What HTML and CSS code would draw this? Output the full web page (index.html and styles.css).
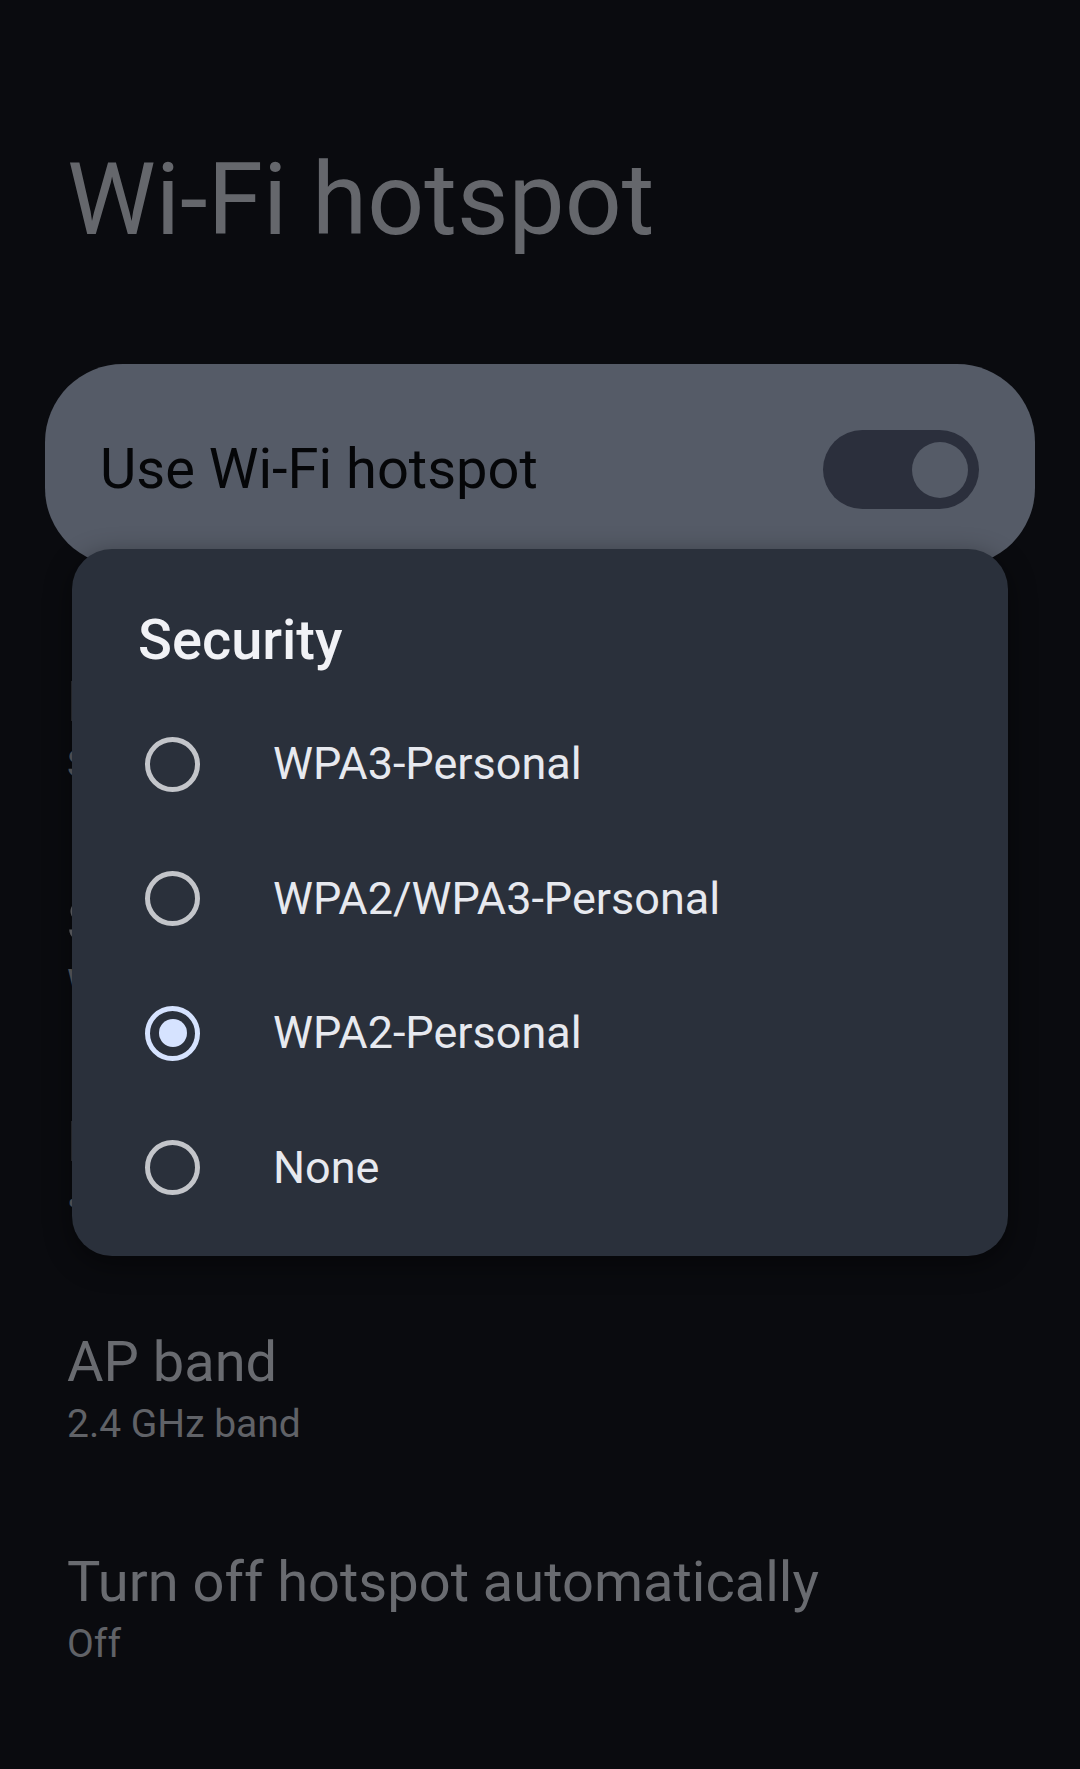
FILE: index.html
```html
<!DOCTYPE html>
<html lang="en">
<head>
  <meta charset="UTF-8">
  <meta name="viewport" content="width=device-width, initial-scale=1.0">
  <title>Wi-Fi hotspot</title>
  <link rel="stylesheet" href="styles.css">
</head>
<body>
  <div class="screen">
    <h1 class="page-title">Wi-Fi hotspot</h1>

    <div class="main-switch">
      <span class="main-switch-label">Use Wi-Fi hotspot</span>
      <span class="toggle"><span class="toggle-thumb"></span></span>
    </div>

    <div class="pref-list">
      <div class="pref">
        <div class="pref-title">Hotspot name</div>
        <div class="pref-summary">SM-A525F</div>
      </div>
      <div class="pref">
        <div class="pref-title">Security</div>
        <div class="pref-summary">WPA2-Personal</div>
      </div>
      <div class="pref">
        <div class="pref-title">Hotspot password</div>
        <div class="pref-summary">••••••••</div>
      </div>
      <div class="pref">
        <div class="pref-title">AP band</div>
        <div class="pref-summary">2.4 GHz band</div>
      </div>
      <div class="pref">
        <div class="pref-title">Turn off hotspot automatically</div>
        <div class="pref-summary">Off</div>
      </div>
    </div>

    <!-- Security dialog -->
    <div class="dialog">
      <h2 class="dialog-title">Security</h2>
      <div class="radio-row">
        <span class="radio"></span>
        <span class="radio-label">WPA3-Personal</span>
      </div>
      <div class="radio-row">
        <span class="radio"></span>
        <span class="radio-label">WPA2/WPA3-Personal</span>
      </div>
      <div class="radio-row">
        <span class="radio checked"></span>
        <span class="radio-label">WPA2-Personal</span>
      </div>
      <div class="radio-row">
        <span class="radio"></span>
        <span class="radio-label">None</span>
      </div>
    </div>
  </div>
</body>
</html>
```

FILE: styles.css
```css
body {
  margin: 0;
  background-color: #0a0b0f;
  font-family: Roboto, "Noto Sans", sans-serif;
}
.screen {
  position: relative;
  min-height: 1769px;
  padding: 140px 45px 0 45px;
  box-sizing: border-box;
}
.page-title {
  margin: 0 0 104px 22px;
  font-size: 100px;
  line-height: 120px;
  font-weight: 400;
  color: #65676c;
}
.main-switch {
  display: flex;
  align-items: center;
  justify-content: space-between;
  height: 202px;
  padding: 8px 56px 0 55px;
  box-sizing: border-box;
  background-color: #555b67;
  border-radius: 78px;
}
.main-switch-label {
  font-size: 56px;
  line-height: 66px;
  color: #050608;
}
.toggle {
  position: relative;
  width: 156px;
  height: 79px;
  border-radius: 40px;
  background-color: #2b2f3c;
}
.toggle-thumb {
  position: absolute;
  top: 12px;
  right: 11px;
  width: 56px;
  height: 56px;
  border-radius: 50%;
  background-color: #555b67;
}
.pref-list {
  margin-top: 52px;
  padding-left: 22px;
}
.pref {
  padding: 51px 0;
}
.pref-title {
  font-size: 56px;
  line-height: 66px;
  color: #696b70;
}
.pref-summary {
  margin-top: 6px;
  font-size: 39px;
  line-height: 46px;
  color: #606267;
}
.dialog {
  position: absolute;
  top: 549px;
  left: 72px;
  width: 936px;
  padding: 59px 0 21px 0;
  box-sizing: border-box;
  background-color: #2a303b;
  border-radius: 40px;
  box-shadow: 0 8px 28px rgba(0, 0, 0, 0.45);
}
.dialog-title {
  margin: 0 0 25px 66px;
  font-size: 56px;
  line-height: 64px;
  font-weight: 500;
  color: #f1f2f6;
}
.radio-row {
  display: flex;
  align-items: center;
  height: 134.5px;
  padding-left: 73px;
}
.radio {
  width: 55px;
  height: 55px;
  box-sizing: border-box;
  border: 5px solid #c3c5ca;
  border-radius: 50%;
  display: flex;
  align-items: center;
  justify-content: center;
  flex-shrink: 0;
}
.radio.checked {
  border-color: #d6e3ff;
}
.radio.checked::after {
  content: "";
  width: 28px;
  height: 28px;
  border-radius: 50%;
  background-color: #d6e3ff;
}
.radio-label {
  margin-left: 73px;
  font-size: 45px;
  line-height: 52px;
  color: #e7e9ef;
}
```
